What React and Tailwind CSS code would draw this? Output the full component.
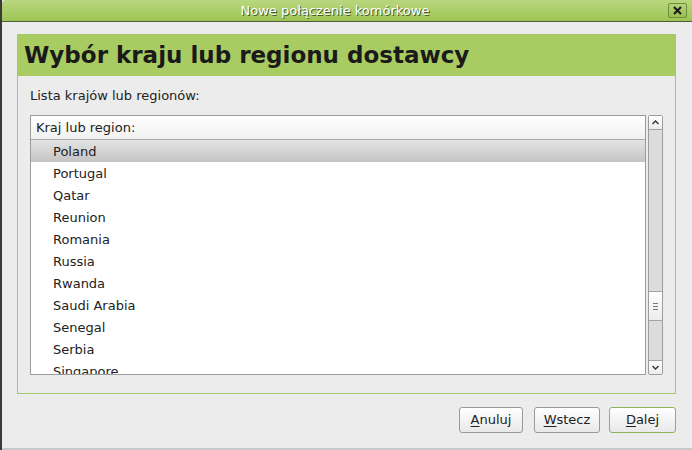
export default function App() {
  const kraje = ['Poland', 'Portugal', 'Qatar', 'Reunion', 'Romania', 'Russia', 'Rwanda', 'Saudi Arabia', 'Senegal', 'Serbia', 'Singapore']

  return (
    <div className="w-[692px] h-[450px] flex flex-col bg-[#ececec] border-l-2 border-[#3a3a3a] overflow-hidden text-[#222]" style={{ fontFamily: '"DejaVu Sans", Verdana, sans-serif' }}>
      {/* pasek tytułu */}
      <div className="h-[22px] shrink-0 relative flex items-center justify-center pr-[24px] bg-gradient-to-b from-[#b9d77f] to-[#9ec553] border-b border-[#4f5a3a] rounded-tl-[4px]">
        <span className="text-[13px] text-white [text-shadow:1px_1px_0_#4a5a2a]">Nowe połączenie komórkowe</span>
        <div className="absolute right-[5px] top-[3px] w-[19px] h-[15px] rounded-[2px] border border-[#6f8d3c] bg-gradient-to-b from-[#b4d478] to-[#98bf4d] flex items-center justify-center">
          <svg width="9" height="9" viewBox="0 0 9 9">
            <path d="M1 1 L8 8 M8 1 L1 8" stroke="#1c1c1c" strokeWidth="2.2" />
          </svg>
        </div>
      </div>

      <div className="flex-1 flex flex-col pt-[12px] pl-[15px]">
        {/* panel */}
        <div className="w-[659px] h-[360px] border border-[#a6c86a] flex flex-col">
          <div className="h-[41px] shrink-0 bg-[#a8cc62] flex items-center pl-[6px]">
            <h1 className="text-[23px] font-bold text-[#1a1a1a] leading-none">Wybór kraju lub regionu dostawcy</h1>
          </div>
          <div className="flex-1 flex flex-col pl-[12px]">
            <p className="text-[13px] mt-[12px] leading-[16px]">Lista krajów lub regionów:</p>
            <div className="flex gap-[2px] mt-[11px]">
              <div className="w-[616px] h-[260px] border border-[#9c9c9c] bg-white overflow-hidden">
                <div className="h-[24px] flex items-center pl-[5px] text-[13px] bg-gradient-to-b from-white to-[#f1f1f1] border-b border-[#a8a8a8]">
                  Kraj lub region:
                </div>
                {kraje.map((k, i) => (
                  <div
                    key={k}
                    className={
                      i === 0
                        ? 'h-[22px] flex items-center pl-[22px] pt-px text-[13px] bg-gradient-to-b from-[#e4e4e4] to-[#c4c4c4]'
                        : 'h-[22px] flex items-center pl-[22px] pt-px text-[13px]'
                    }
                  >
                    {k}
                  </div>
                ))}
              </div>
              {/* pasek przewijania */}
              <div className="w-[15px] h-[260px] border border-[#9c9c9c] bg-[#dcdcdc] flex flex-col rounded-[2px]">
                <div className="h-[14px] shrink-0 bg-gradient-to-b from-white to-[#ececec] border-b border-[#a4a4a4] flex items-center justify-center">
                  <svg width="7" height="5" viewBox="0 0 7 5">
                    <path d="M0.5 4 L3.5 1 L6.5 4" stroke="#333" strokeWidth="1.4" fill="none" />
                  </svg>
                </div>
                <div className="flex-1 flex flex-col">
                  <div className="h-[161px]" />
                  <div className="h-[30px] bg-gradient-to-b from-white to-[#ececec] border-y border-[#a4a4a4] flex flex-col items-center justify-center gap-[2px]">
                    <div className="w-[5px] h-px bg-[#777]" />
                    <div className="w-[5px] h-px bg-[#777]" />
                    <div className="w-[5px] h-px bg-[#777]" />
                  </div>
                </div>
                <div className="h-[14px] shrink-0 bg-gradient-to-b from-white to-[#ececec] border-t border-[#a4a4a4] flex items-center justify-center">
                  <svg width="7" height="5" viewBox="0 0 7 5">
                    <path d="M0.5 1 L3.5 4 L6.5 1" stroke="#333" strokeWidth="1.4" fill="none" />
                  </svg>
                </div>
              </div>
            </div>
          </div>
        </div>

        {/* przyciski */}
        <div className="w-[659px] flex justify-end mt-[13px] text-[13px]">
          <button className="w-[64px] h-[26px] rounded-[3px] border border-[#9a9a9a] bg-gradient-to-b from-white to-[#e9e9e9]">
            <span className="underline underline-offset-2">A</span>nuluj
          </button>
          <button className="w-[66px] h-[26px] ml-[11px] rounded-[3px] border border-[#9a9a9a] bg-gradient-to-b from-white to-[#e9e9e9]">
            <span className="underline underline-offset-2">W</span>stecz
          </button>
          <button className="w-[67px] h-[26px] ml-[9px] rounded-[3px] border border-[#8fb356] bg-gradient-to-b from-white to-[#e9e9e9]">
            <span className="underline underline-offset-2">D</span>alej
          </button>
        </div>
      </div>
      <div className="h-[2px] shrink-0 bg-[#c8c8c8]" />
    </div>
  )
}
